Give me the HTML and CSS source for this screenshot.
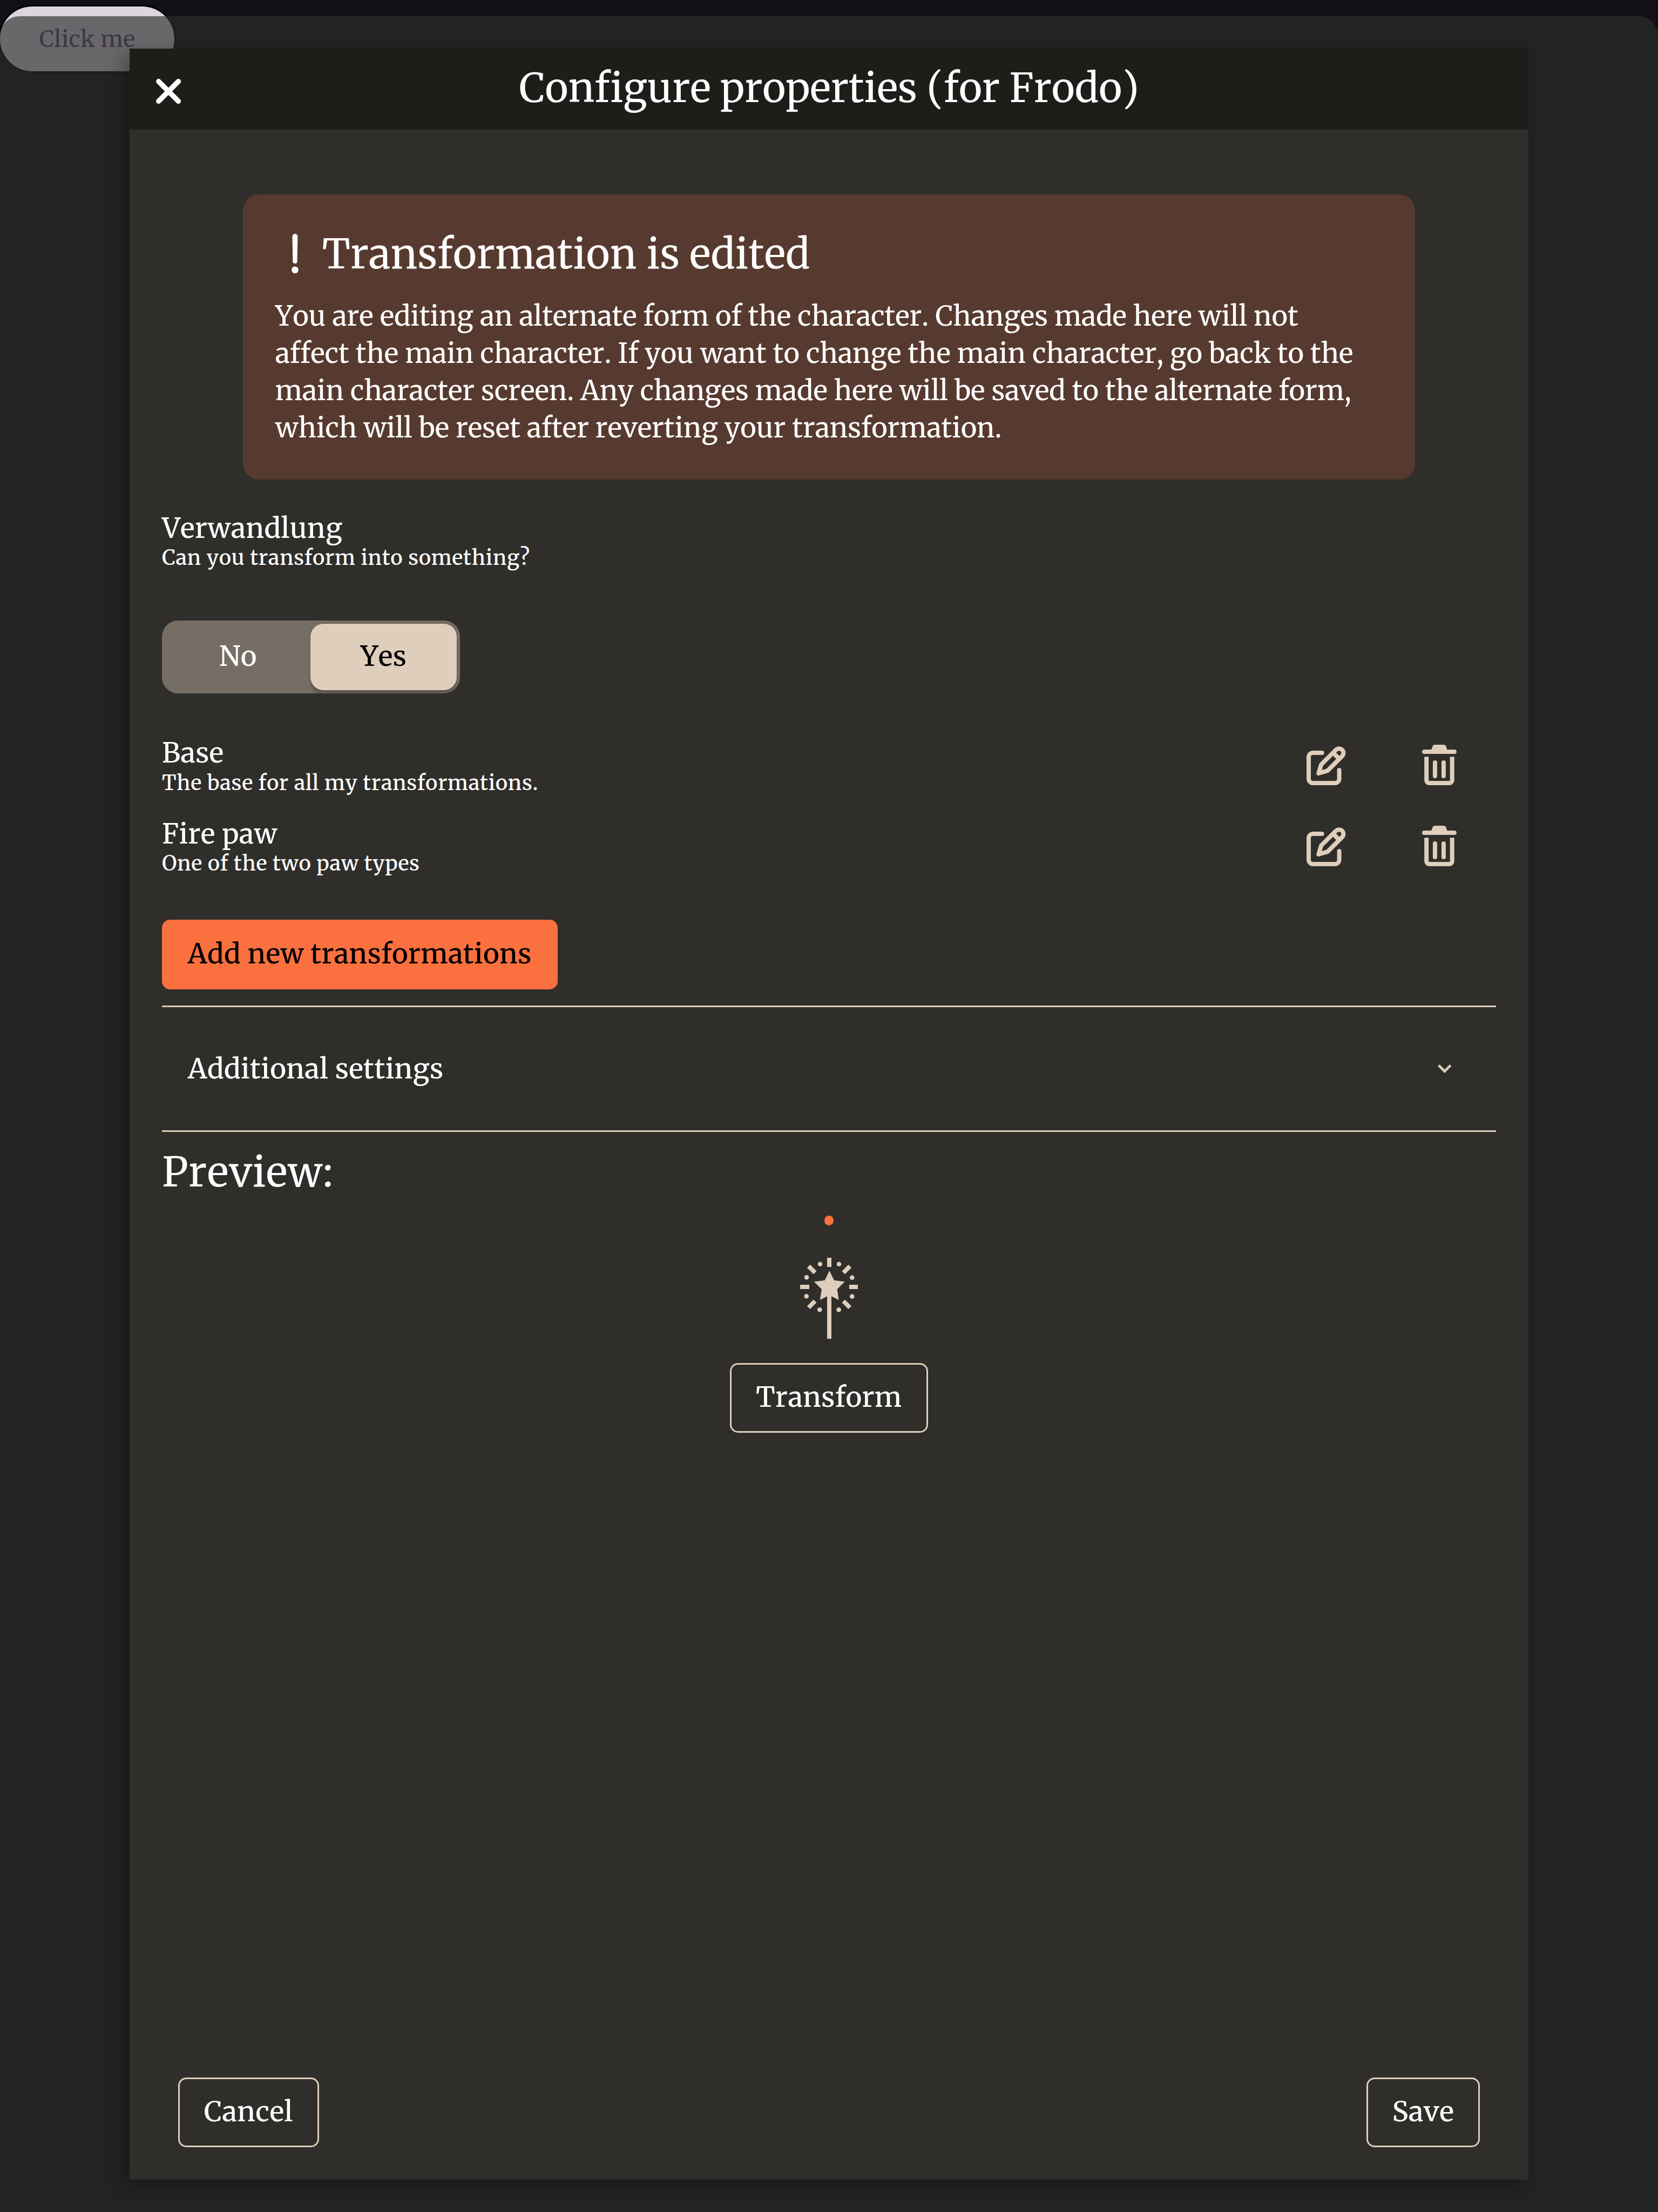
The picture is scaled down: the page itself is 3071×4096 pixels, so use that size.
FILE: index.html
```html
<!DOCTYPE html>
<html lang="en">
<head>
<meta charset="utf-8">
<title>Configure properties</title>
<link rel="stylesheet" href="styles.css">
</head>
<body>
<svg class="sprite" aria-hidden="true">
  <symbol id="icon-edit" viewBox="0 0 73 72">
    <g fill="none" stroke="currentColor" stroke-width="8" stroke-linejoin="round" stroke-linecap="round">
      <path d="M28.7 12H12a8 8 0 0 0-8 8v40a8 8 0 0 0 8 8h40.7a8 8 0 0 0 8-8V44"/>
      <path d="M54.5 6.5a8.2 8.2 0 0 1 11.6 11.6L39 45.2L22.3 50L27.2 33.8Z"/>
      <path stroke-linecap="butt" d="M50 12.6l10 10"/>
    </g>
  </symbol>
  <symbol id="icon-trash" viewBox="0 0 64 78">
    <path fill="currentColor" d="M17 9.5C19.5 6 18.5 0 24 0H40C45.5 0 44.5 6 47 9.5Z"/>
    <g fill="none" stroke="currentColor" stroke-width="8" stroke-linecap="round">
      <path d="M4 13H60M24 33V58M40 33V58"/>
      <path stroke-linecap="butt" d="M8.2 22.3V66a5 5 0 0 0 5 5H50.8a5 5 0 0 0 5-5V22.3"/>
    </g>
  </symbol>
</svg>

<button class="trigger">Click me</button>

<div class="backdrop">
  <section class="dialog">
    <header class="dialog-header">
      <button class="close" aria-label="Close">
        <svg viewBox="0 0 46 46"><path d="M4.8 4.8L41.2 41.2M41.2 4.8L4.8 41.2" stroke="currentColor" stroke-width="9.5" stroke-linecap="round"/></svg>
      </button>
      <h1 class="dialog-title">Configure properties (for Frodo)</h1>
    </header>

    <div class="dialog-body">
      <div class="notice">
        <h2 class="notice-title">
          <svg class="notice-icon" viewBox="0 0 29 30"><path d="M10.5 4a1.65 1.65 0 0 1 3.3 0L13.5 19.3a1.35 1.35 0 0 1-2.7 0Z" fill="currentColor"/><circle cx="12.15" cy="24.6" r="2.1" fill="currentColor"/></svg>
          Transformation is edited
        </h2>
        <p class="notice-text">You are editing an alternate form of the character. Changes made here will not affect the main character. If you want to change the main character, go back to the main character screen. Any changes made here will be saved to the alternate form, which will be reset after reverting your transformation.</p>
      </div>

      <div class="field">
        <div class="label">Verwandlung</div>
        <div class="hint">Can you transform into something?</div>
      </div>

      <div class="toggle">
        <button class="option">No</button>
        <button class="option selected">Yes</button>
      </div>

      <div class="list">
        <div class="row">
          <div class="row-text">
            <div class="label">Base</div>
            <div class="hint">The base for all my transformations.</div>
          </div>
          <button class="icon-button" aria-label="Edit"><svg class="icon-edit"><use href="#icon-edit"/></svg></button>
          <button class="icon-button" aria-label="Delete"><svg class="icon-trash"><use href="#icon-trash"/></svg></button>
        </div>
        <div class="row">
          <div class="row-text">
            <div class="label">Fire paw</div>
            <div class="hint">One of the two paw types</div>
          </div>
          <button class="icon-button" aria-label="Edit"><svg class="icon-edit"><use href="#icon-edit"/></svg></button>
          <button class="icon-button" aria-label="Delete"><svg class="icon-trash"><use href="#icon-trash"/></svg></button>
        </div>
      </div>

      <button class="button primary">Add new transformations</button>

      <div class="accordion">
        <span class="label">Additional settings</span>
        <svg class="chevron" viewBox="0 0 25.4 16"><path d="M1.7 1.7L12.7 12.7L23.7 1.7" fill="none" stroke="currentColor" stroke-width="4.7"/></svg>
      </div>

      <h2 class="preview-title">Preview:</h2>
      <div class="preview">
        <span class="dot"></span>
        <svg class="wand" viewBox="0 0 108 150" fill="currentColor">
          <path d="M50 0h8v17h-8zM0 50h17v8H0zM91 50h17v8H91z"/>
          <g stroke="currentColor" stroke-width="8"><path d="M15.7 15.7l12 12M92.3 15.7l-12 12M15.7 92.3l12-12M92.3 92.3l-12-12"/></g>
          <circle cx="37" cy="11.7" r="4.3"/><circle cx="72" cy="11.7" r="4.3"/>
          <circle cx="96.3" cy="36.7" r="4.3"/><circle cx="96.3" cy="71.7" r="4.3"/>
          <circle cx="71.6" cy="96.3" r="4.3"/><circle cx="36.3" cy="96.3" r="4.3"/>
          <circle cx="11.7" cy="71.3" r="4.3"/><circle cx="12" cy="36.3" r="4.3"/>
          <path d="M54.3 24L63 41.7L82.7 44.3L68.7 58.3L71.7 78.3L58 71.3V150H50V71.3L36.7 78.3L40 58.3L25.7 44.3L45.7 41.7Z"/>
        </svg>
        <button class="button outlined">Transform</button>
      </div>
    </div>

    <footer class="dialog-footer">
      <button class="button outlined">Cancel</button>
      <button class="button outlined">Save</button>
    </footer>
  </section>
</div>
</body>
</html>
```
FILE: styles.css
```css
/* 1rem = 10 layout units; the layout is 102.4rem wide */
html {
  font-size: 29.99px;
}

* {
  box-sizing: border-box;
}

body {
  margin: 0;
  height: 4096px;
  overflow: hidden;
  background: #121015;
  color: #fff;
  font-family: "Merriweather", "Noto Serif", "DejaVu Serif Condensed", serif;
  font-size: 1.69rem;
  font-weight: 500;
  font-kerning: none;
  letter-spacing: 0.014rem;
}

h1, h2, p {
  margin: 0;
  font-weight: 450;
  letter-spacing: 0;
}

button {
  display: block;
  margin: 0;
  padding: 0;
  border: 0;
  background: none;
  color: inherit;
  font: inherit;
  font-kerning: none;
  letter-spacing: inherit;
}

svg {
  display: block;
}

.sprite {
  position: absolute;
  width: 0;
  height: 0;
}

.trigger {
  width: 10.77rem;
  height: 4rem;
  margin-top: 0.4rem;
  border-radius: 2rem;
  background: #dbd6de;
  box-shadow: 0 0 0 0.1rem #000;
  color: #5a4c82;
  font-size: 1.4rem;
  font-weight: 400;
  letter-spacing: 0.01rem;
}

.backdrop {
  position: absolute;
  top: 1rem;
  left: 0;
  width: 100%;
  height: calc(4096px - 1rem);
  padding: 2rem 8rem;
  border-radius: 1.2rem 1.2rem 0 0;
  background: rgba(46, 46, 44, 0.657);
}

.dialog {
  display: flex;
  flex-direction: column;
  height: 100%;
  background: #2f2e2a;
  box-shadow: -0.4rem 0.4rem 1rem rgba(0, 0, 0, 0.3);
}

.dialog-header {
  display: grid;
  grid-template-columns: 1fr auto 1fr;
  align-items: center;
  height: 5rem;
  background: #1e1d1a;
}

.close {
  width: 1.54rem;
  margin: 0.27rem 0 0 1.63rem;
}

.dialog-title {
  padding-bottom: 0.1rem;
  font-size: 2.455rem;
  line-height: 4.9rem;
}

.dialog-body {
  flex: 1;
  padding: 4rem 2rem 0;
}

.notice {
  height: 17.6rem;
  margin: 0 5rem;
  padding: 2.22rem 2rem 0;
  border-radius: 1rem;
  background: #573a2f;
}

.notice-title {
  display: flex;
  font-size: 2.5rem;
  letter-spacing: 0.007rem;
  line-height: 3rem;
}

.notice-icon {
  width: 2.9rem;
  height: 3rem;
}

.notice-text {
  margin-top: 1.17rem;
  padding-right: 1rem;
  font-size: 1.685rem;
  line-height: 2.3rem;
}

.field {
  margin-top: 1.98rem;
}

.label {
  line-height: 2.07rem;
}

.hint {
  font-size: 1.27rem;
  letter-spacing: 0.025rem;
  line-height: 1.6rem;
}

.toggle {
  display: grid;
  grid-template-columns: 1fr 1fr;
  width: 18.42rem;
  height: 4.5rem;
  margin-top: 3.05rem;
  padding: 0.2rem;
  border-radius: 1rem;
  background: #766e64;
  overflow: hidden;
}

.option {
  padding-bottom: 0.1rem;
  border-radius: 0.8rem;
}

.option.selected {
  margin-left: -0.05rem;
  background: #decebb;
  box-shadow: 0 0.3rem 0.1rem rgba(0, 0, 0, 0.16), 0 0 0.1rem rgba(0, 0, 0, 0.3);
  color: #000;
}

.list {
  margin-top: 2rem;
}

.row {
  display: flex;
  align-items: center;
  height: 5rem;
}

.row-text {
  flex: 1;
}

.icon-button {
  display: flex;
  justify-content: center;
  width: 7rem;
  color: #decebb;
}

.icon-edit {
  width: 2.43rem;
  height: 2.4rem;
}

.icon-trash {
  width: 2.13rem;
  height: 2.6rem;
}

.button {
  height: 4.3rem;
  padding: 0 1.6rem 0.1rem;
  border-radius: 0.5rem;
}

.button.primary {
  margin-top: 2rem;
  background: #fb703f;
  color: #000;
}

.button.outlined {
  padding: 0 1.5rem 0.1rem;
  border: 3px solid #decebb;
}

.accordion {
  display: flex;
  align-items: center;
  justify-content: space-between;
  height: 7.8rem;
  margin-top: 1rem;
  padding: 0 2.77rem 0 1.6rem;
  border: solid #decebb;
  border-width: 3px 0;
}

.chevron {
  width: 0.85rem;
  color: #decebb;
}

.preview-title {
  margin-top: 1rem;
  font-size: 2.52rem;
  letter-spacing: 0.025rem;
  line-height: 3rem;
}

.preview {
  display: flex;
  flex-direction: column;
  align-items: center;
  margin-top: 1.17rem;
}

.dot {
  width: 0.6rem;
  height: 0.6rem;
  border-radius: 50%;
  background: #fb703f;
}

.wand {
  width: 3.6rem;
  height: 5rem;
  margin: 2rem 0 1.5rem;
  color: #decebb;
}

.dialog-footer {
  display: flex;
  justify-content: space-between;
  padding: 0 3rem 2rem;
}
```
